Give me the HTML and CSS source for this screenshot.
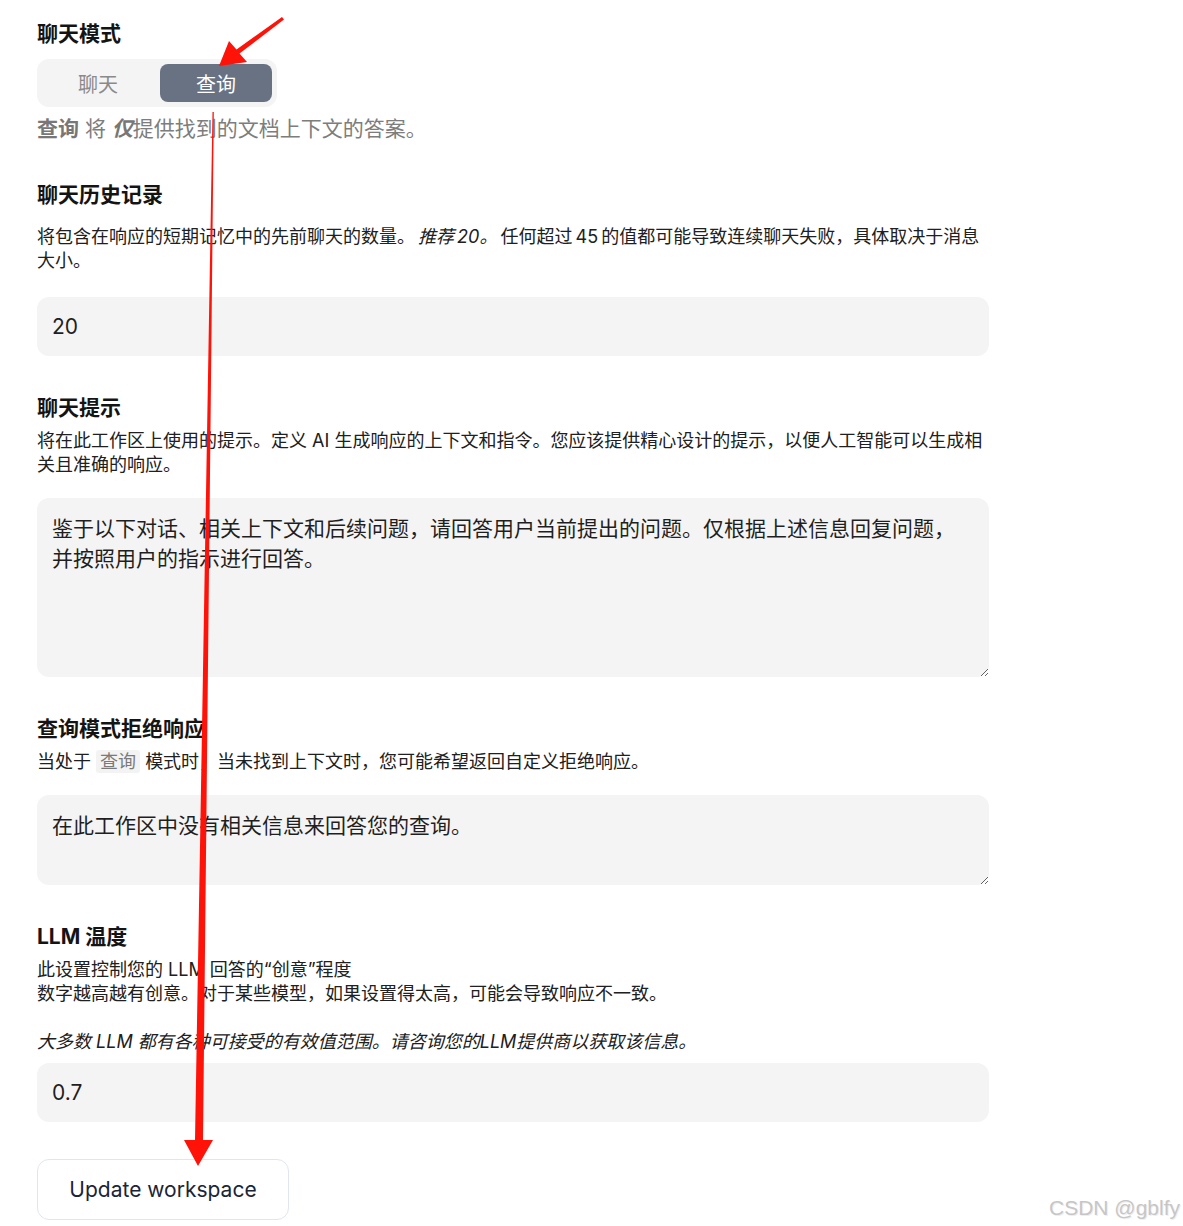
FILE: index.html
```
<!DOCTYPE html>
<html lang="zh-CN">
<head>
    <meta charset="UTF-8">
    <meta name="viewport" content="width=device-width, initial-scale=1.0">
    <title>工作区设置</title>
    <link rel="stylesheet" href="styles.css">
</head>
<body>
    <div class="page">
        <div class="settings">
            <section class="field">
                <h3 class="field-title">聊天模式</h3>
                <div class="mode-switch">
                    <button class="mode-btn">聊天</button>
                    <button class="mode-btn active">查询</button>
                </div>
                <p class="mode-note"><b>查询</b> 将 <b><i>仅</i></b>提供找到的文档上下文的答案。</p>
            </section>

            <section class="field">
                <h3 class="field-title">聊天历史记录</h3>
                <p class="field-desc desc-wide">将包含在响应的短期记忆中的先前聊天的数量。 <i>推荐 20。</i> 任何超过 45 的值都可能导致连续聊天失败，具体取决于消息大小。</p>
                <input class="text-input input-history" type="number" value="20">
            </section>

            <section class="field">
                <h3 class="field-title">聊天提示</h3>
                <p class="field-desc">将在此工作区上使用的提示。定义 AI 生成响应的上下文和指令。您应该提供精心设计的提示，以便人工智能可以生成相关且准确的响应。</p>
                <textarea class="text-area area-prompt">鉴于以下对话、相关上下文和后续问题，请回答用户当前提出的问题。仅根据上述信息回复问题，并按照用户的指示进行回答。</textarea>
            </section>

            <section class="field">
                <h3 class="field-title">查询模式拒绝响应</h3>
                <p class="field-desc">当处于 <code class="tag">查询</code> 模式时，当未找到上下文时，您可能希望返回自定义拒绝响应。</p>
                <textarea class="text-area area-refusal">在此工作区中没有相关信息来回答您的查询。</textarea>
            </section>

            <section class="field">
                <h3 class="field-title">LLM 温度</h3>
                <p class="field-desc">此设置控制您的 LLM 回答的“创意”程度<br>数字越高越有创意。对于某些模型，如果设置得太高，可能会导致响应不一致。<br><br><i>大多数 LLM 都有各种可接受的有效值范围。请咨询您的LLM提供商以获取该信息。</i></p>
                <input class="text-input input-temp" type="number" value="0.7">
            </section>

            <button class="update-btn">Update workspace</button>
        </div>

        <svg class="marks" width="1183" height="1226" viewBox="0 0 1183 1226">
            <polygon points="282,17 284,19.5 239.5,53.5 247,62 219,66 229,41 236.5,49.5" fill="#ff1208"/>
            <polygon points="212.5,112 213.8,112 203,1140 213,1140 198,1166 184,1140 195,1140" fill="#ff1208"/>
        </svg>
        <div class="watermark">CSDN @gblfy</div>
    </div>
</body>
</html>
```

FILE: styles.css
```
body {
    margin: 0;
    background-color: #fff;
    color: #1c1c1c;
    font-family: Inter, "Noto Sans CJK SC", sans-serif;
}
.page {
    position: relative;
    width: 1183px;
    height: 1226px;
    padding: 20px 0 0 37px;
    box-sizing: border-box;
    overflow: hidden;
}
.settings {
    width: 952px;
}
.field + .field {
    margin-top: 38px;
}
.field-title {
    margin: 0;
    font-size: 21px;
    font-weight: 700;
    line-height: 28px;
    color: #141414;
}
.mode-switch {
    display: inline-flex;
    gap: 6px;
    margin-top: 11px;
    padding: 5px;
    background-color: #f4f4f5;
    border-radius: 12px;
}
.mode-btn {
    width: 112px;
    height: 38px;
    border: none;
    border-radius: 8px;
    background: transparent;
    color: #8a8a8a;
    font-family: inherit;
    font-size: 20px;
    cursor: pointer;
}
.mode-btn.active {
    background-color: #687283;
    color: #fff;
}
.mode-note {
    margin: 8px 0 0;
    font-size: 21px;
    line-height: 28px;
    color: #7d7d7d;
}
.mode-note b {
    color: #777;
}
.field-desc {
    margin: 7px 0 0;
    font-size: 18px;
    line-height: 24px;
    color: #202020;
}
.desc-wide {
    margin-top: 16px;
    word-spacing: -2px;
}
.tag {
    padding: 1px 4px;
    background-color: #f3f3f4;
    border-radius: 3px;
    color: #7a7a7a;
    font-family: inherit;
    font-size: 18px;
}
.text-input,
.text-area {
    display: block;
    width: 100%;
    box-sizing: border-box;
    border: none;
    border-radius: 12px;
    background-color: #f4f4f4;
    color: #1f1f1f;
    font-family: inherit;
    outline: none;
}
.text-input {
    height: 59px;
    padding: 0 15px;
    font-size: 21px;
    -moz-appearance: textfield;
}
.text-input::-webkit-inner-spin-button,
.text-input::-webkit-outer-spin-button {
    -webkit-appearance: none;
    margin: 0;
}
.input-history {
    margin-top: 24px;
}
.input-temp {
    margin-top: 9px;
}
.text-area {
    padding: 16px 15px;
    font-size: 21px;
    line-height: 30px;
    resize: vertical;
}
.area-prompt {
    height: 179px;
    margin-top: 21px;
}
.area-refusal {
    height: 90px;
    margin-top: 21px;
}
.update-btn {
    display: block;
    width: 252px;
    height: 61px;
    margin-top: 37px;
    border: 1px solid #e0e6ef;
    border-radius: 12px;
    background-color: #fff;
    color: #1c2437;
    font-family: inherit;
    font-size: 21px;
    cursor: pointer;
}
.marks {
    position: absolute;
    left: 0;
    top: 0;
    pointer-events: none;
}
.watermark {
    position: absolute;
    right: 3px;
    bottom: 6px;
    font-family: "Liberation Sans", Arial, sans-serif;
    font-size: 21px;
    color: #c6c6c6;
    text-shadow: 1px 1px 0 #eee;
}
```
